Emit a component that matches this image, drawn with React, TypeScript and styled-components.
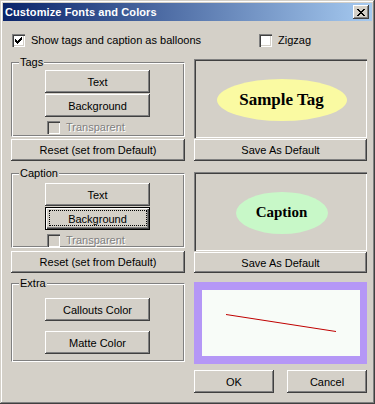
import React from "react";
import styled, { createGlobalStyle } from "styled-components";

const GlobalStyle = createGlobalStyle`
  html, body {
    margin: 0;
    padding: 0;
    background: #d4d0c8;
  }
  body {
    font-family: "Liberation Sans", Arial, sans-serif;
    font-size: 11px;
    color: #000;
  }
`;

const Window = styled.div`
  width: 375px;
  height: 404px;
  box-sizing: border-box;
  padding: 3px;
  background: #d4d0c8;
  box-shadow: inset -1px -1px #404040, inset 1px 1px #d4d0c8,
    inset -2px -2px #808080, inset 2px 2px #ffffff;
  display: flex;
  flex-direction: column;
`;

const TitleBar = styled.div`
  height: 18px;
  background: linear-gradient(to right, #0a246a, #a6caf0);
  display: flex;
  align-items: center;
  justify-content: space-between;
  padding: 0 3px 0 2px;
`;

const TitleText = styled.span`
  color: #fff;
  font-weight: bold;
  font-size: 11px;
  letter-spacing: 0.1px;
`;

const CloseBox = styled.div`
  width: 16px;
  height: 14px;
  background: #d4d0c8;
  box-shadow: inset -1px -1px #404040, inset 1px 1px #fff, inset -2px -2px #808080;
  display: flex;
  align-items: center;
  justify-content: center;
`;

const Body = styled.div`
  padding: 0 5px 0 8px;
  display: flex;
  flex-direction: column;
`;

const TopRow = styled.div`
  margin-top: 13px;
  height: 13px;
  display: grid;
  grid-template-columns: 174px 173px;
  column-gap: 9px;
`;

const Section = styled.div<{ $top: number; $h: number }>`
  margin-top: ${p => p.$top}px;
  height: ${p => p.$h}px;
  display: grid;
  grid-template-columns: 174px 173px;
  column-gap: 9px;
`;

const Column = styled.div<{ $pad?: number }>`
  display: flex;
  flex-direction: column;
  padding-top: ${p => p.$pad || 0}px;
`;

const Group = styled.div<{ $h: number; $pad: number; $gap: number }>`
  position: relative;
  box-sizing: border-box;
  height: ${p => p.$h}px;
  border-top: 1px solid #808080;
  border-left: 1px solid #808080;
  border-right: 1px solid #fff;
  border-bottom: 1px solid #fff;
  box-shadow: inset 1px 1px #fff, inset -1px -1px #808080;
  padding: ${p => p.$pad}px 0 0 33px;
  display: flex;
  flex-direction: column;
  align-items: flex-start;
  gap: ${p => p.$gap}px;
`;

const GroupLabel = styled.span`
  position: absolute;
  top: -7px;
  left: 7px;
  padding: 0 1px;
  line-height: 13px;
  background: #d4d0c8;
`;

const Button = styled.div<{ $w?: number; $h?: number; $focus?: boolean }>`
  position: relative;
  box-sizing: border-box;
  width: ${p => (p.$w ? `${p.$w}px` : "100%")};
  height: ${p => p.$h || 23}px;
  background: #d4d0c8;
  display: flex;
  align-items: center;
  justify-content: center;
  font-size: 11px;
  white-space: nowrap;
  box-shadow: ${p =>
    p.$focus
      ? "inset 1px 1px #000, inset -1px -1px #000, inset 2px 2px #fff, inset -2px -2px #404040, inset -3px -3px #808080"
      : "inset -1px -1px #404040, inset 1px 1px #fff, inset -2px -2px #808080"};
  &::after {
    content: "";
    display: ${p => (p.$focus ? "block" : "none")};
    position: absolute;
    left: 4px;
    right: 3px;
    top: 3px;
    bottom: 4px;
    border: 1px dotted #000;
  }
`;

const CheckRow = styled.label<{ $indent?: number; $disabled?: boolean }>`
  display: flex;
  align-items: center;
  gap: 6px;
  height: 13px;
  margin-left: ${p => p.$indent || 0}px;
  line-height: 13px;
  white-space: nowrap;
  color: ${p => (p.$disabled ? "#808080" : "#000")};
  text-shadow: ${p => (p.$disabled ? "1px 1px #fff" : "none")};
`;

const Box = styled.span<{ $disabled?: boolean }>`
  width: 13px;
  height: 13px;
  box-sizing: border-box;
  flex: none;
  background: ${p => (p.$disabled ? "#d4d0c8" : "#fff")};
  box-shadow: inset 1px 1px #808080, inset 2px 2px #404040,
    inset -1px -1px #fff, inset -2px -2px #d4d0c8;
  display: flex;
  align-items: center;
  justify-content: center;
`;

const Panel = styled.div`
  box-sizing: border-box;
  height: 79px;
  background: #d4d0c8;
  box-shadow: inset 1px 1px #808080, inset 2px 2px #404040,
    inset -1px -1px #fff, inset -2px -2px #d4d0c8;
  display: flex;
  align-items: center;
  justify-content: center;
`;

const Balloon = styled.div<{ $bg: string; $w: number; $size: number }>`
  width: ${p => p.$w}px;
  height: 42px;
  border-radius: 50%;
  background: ${p => p.$bg};
  display: flex;
  align-items: center;
  justify-content: center;
  margin: 2px 0 0 2px;
  white-space: nowrap;
  font-family: "Liberation Serif", "Times New Roman", serif;
  font-weight: bold;
  font-size: ${p => p.$size}px;
`;

const Preview = styled.div`
  box-sizing: border-box;
  height: 82px;
  border: 8px solid #b597f6;
  border-right-width: 7px;
  background: #f8fcf8;
`;

const ButtonRow = styled.div`
  margin-top: 6px;
  display: grid;
  grid-template-columns: 174px 173px;
  column-gap: 9px;
`;

const DialogButtons = styled.div`
  display: flex;
  justify-content: space-between;
`;

const Check = () => (
  <svg width="7" height="7" viewBox="0 0 7 7" shapeRendering="crispEdges">
    {[2, 3, 4, 3, 2, 1, 0].map((y, x) => (
      <rect key={x} x={x} y={y} width="1" height="3" fill="#000" />
    ))}
  </svg>
);

const CheckBox: React.FC<{ checked?: boolean; disabled?: boolean; label: string; indent?: number }> = ({
  checked,
  disabled,
  label,
  indent,
}) => (
  <CheckRow $indent={indent} $disabled={disabled}>
    <Box $disabled={disabled}>{checked && <Check />}</Box>
    {label}
  </CheckRow>
);

export default function App() {
  return (
    <>
      <GlobalStyle />
      <Window>
        <TitleBar>
          <TitleText>Customize Fonts and Colors</TitleText>
          <CloseBox>
            <svg width="8" height="7" viewBox="0 0 8 7" shapeRendering="crispEdges">
              <path d="M0 0h2v1h1v1h2v-1h1v-1h2v1h-1v1h-1v1h-1v1h1v1h1v1h1v1h-2v-1h-1v-1h-2v1h-1v1h-2v-1h1v-1h1v-1h1v-1h-1v-1h-1v-1h-1z" fill="#000" />
            </svg>
          </CloseBox>
        </TitleBar>
        <Body>
          <TopRow>
            <CheckBox checked label="Show tags and caption as balloons" indent={1} />
            <CheckBox label="Zigzag" indent={65} />
          </TopRow>

          <Section $top={12} $h={102}>
            <Column $pad={3}>
              <Group $h={75} $pad={7} $gap={1}>
                <GroupLabel>Tags</GroupLabel>
                <Button $w={105}>Text</Button>
                <Button $w={105}>Background</Button>
                <div style={{ marginTop: 3 }}>
                  <CheckBox disabled label="Transparent" indent={2} />
                </div>
              </Group>
              <div style={{ marginTop: 2 }}>
                <Button $h={22}>Reset (set from Default)</Button>
              </div>
            </Column>
            <Column>
              <Panel>
                <Balloon $bg="#fafaa2" $w={130} $size={17}>Sample Tag</Balloon>
              </Panel>
              <div style={{ marginTop: 1 }}>
                <Button $h={22}>Save As Default</Button>
              </div>
            </Column>
          </Section>

          <Section $top={11} $h={102}>
            <Column $pad={1}>
              <Group $h={75} $pad={9} $gap={1}>
                <GroupLabel>Caption</GroupLabel>
                <Button $w={105}>Text</Button>
                <Button $w={105} $focus>Background</Button>
                <div style={{ marginTop: 3 }}>
                  <CheckBox disabled label="Transparent" indent={2} />
                </div>
              </Group>
              <div style={{ marginTop: 3 }}>
                <Button $h={22}>Reset (set from Default)</Button>
              </div>
            </Column>
            <Column>
              <Panel>
                <Balloon $bg="#c8f8c8" $w={92} $size={15}>Caption</Balloon>
              </Panel>
              <div style={{ marginTop: 1 }}>
                <Button $h={21}>Save As Default</Button>
              </div>
            </Column>
          </Section>

          <Section $top={8} $h={82}>
            <Column $pad={1}>
              <Group $h={79} $pad={14} $gap={10}>
                <GroupLabel>Extra</GroupLabel>
                <Button $w={105}>Callouts Color</Button>
                <Button $w={105}>Matte Color</Button>
              </Group>
            </Column>
            <Preview>
              <svg width="158" height="66" viewBox="0 0 158 66">
                <line x1="24" y1="24.5" x2="134" y2="41.5" stroke="#c00000" strokeWidth="1" />
              </svg>
            </Preview>
          </Section>

          <ButtonRow>
            <div />
            <DialogButtons>
              <Button $w={80}>OK</Button>
              <Button $w={80}>Cancel</Button>
            </DialogButtons>
          </ButtonRow>
        </Body>
      </Window>
    </>
  );
}
